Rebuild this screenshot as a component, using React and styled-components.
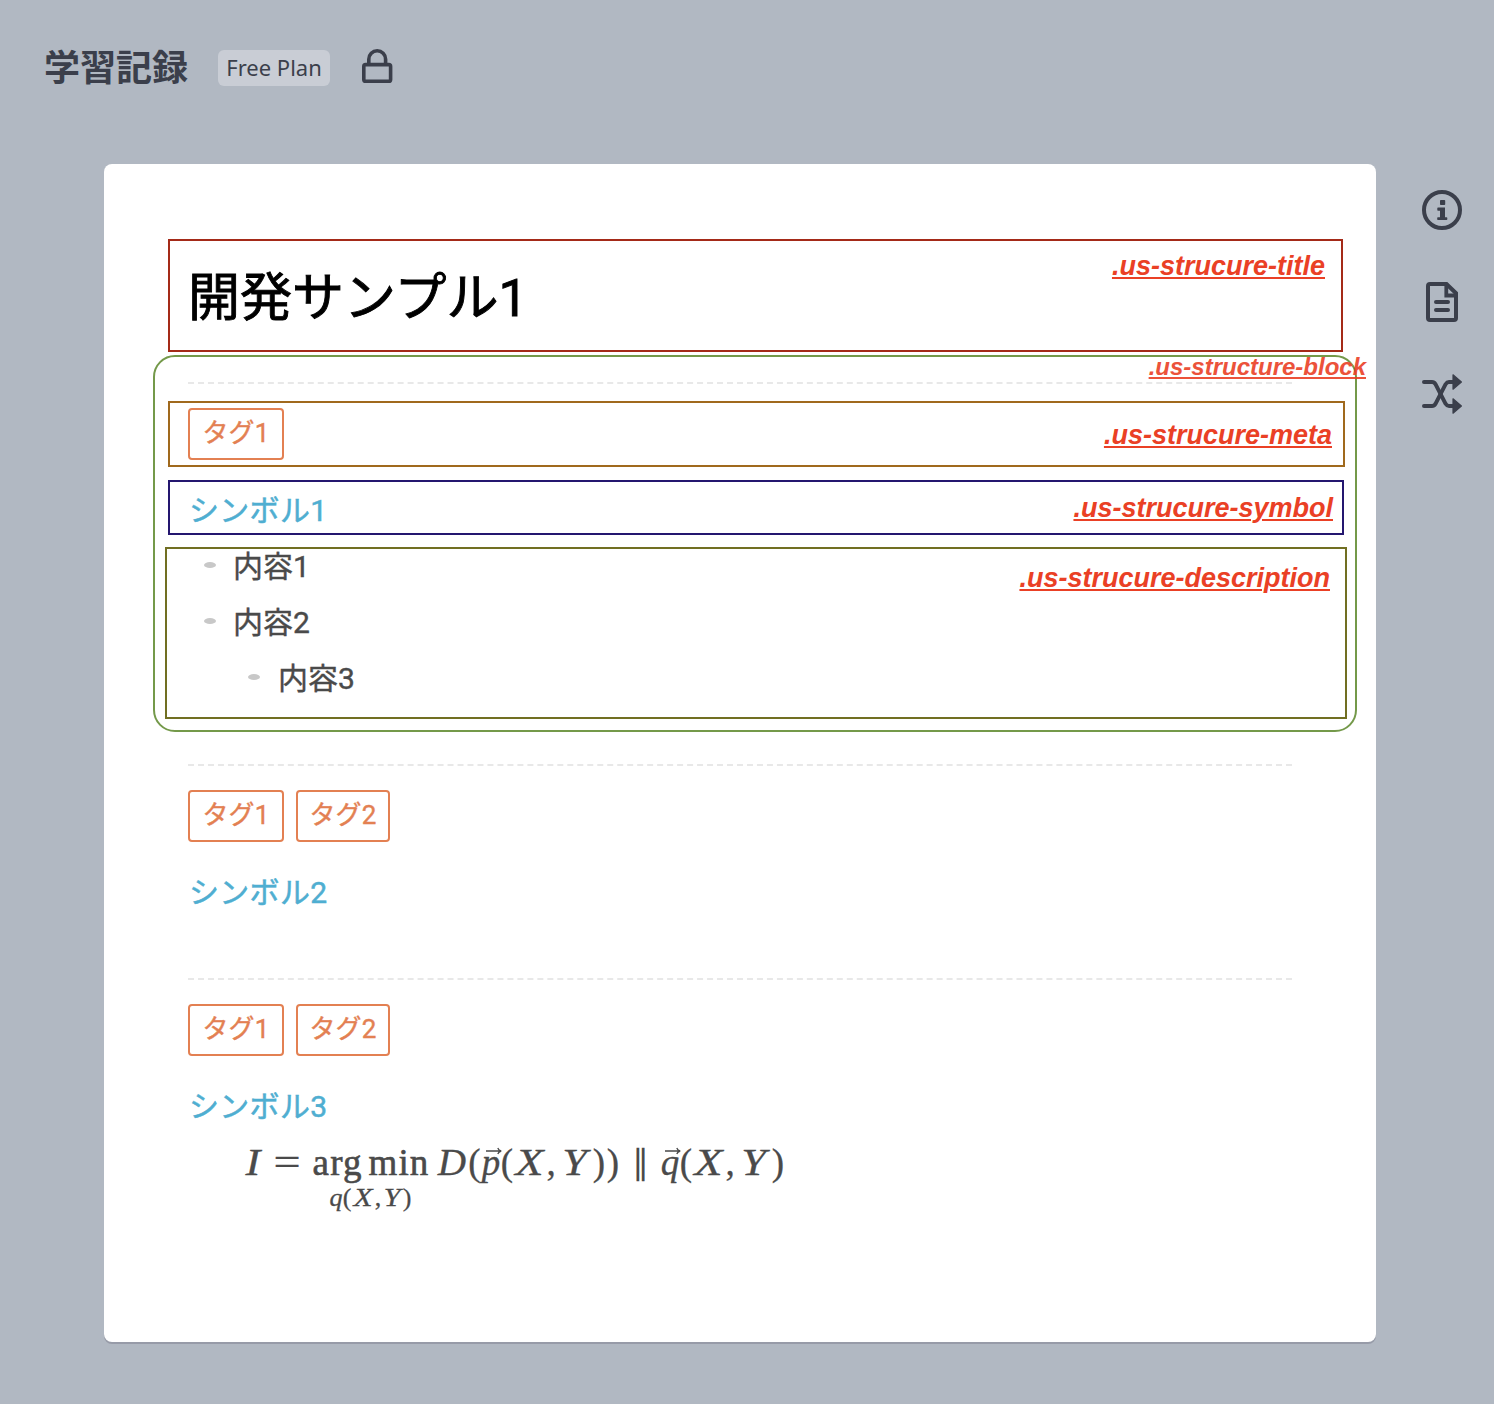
import React from 'react';
import styled, { createGlobalStyle } from 'styled-components';

const GlobalStyle = createGlobalStyle`
  *, *::before, *::after { box-sizing: border-box; }
  body { margin: 0; background: #b1b8c2; }
`;

const ink = '#3b3f4b';
const bodyFont = 'Roboto, "Noto Sans CJK JP", sans-serif';

const Page = styled.div`
  width: 1494px;
  height: 1404px;
  background: #b1b8c2;
  overflow: hidden;
  font-family: ${bodyFont};
`;

const Header = styled.header`
  display: flex;
  align-items: flex-start;
  height: 164px;
  padding: 48px 0 0 44px;
  color: ${ink};
`;

const NotebookTitle = styled.h1`
  margin: -2px 0 0;
  width: 174px;
  font: 700 36px/38px "Noto Sans CJK JP", sans-serif;
`;

const PlanBadge = styled.span`
  width: 112px;
  height: 36px;
  margin: 2px 30px 0 0;
  border-radius: 6px;
  background: #c9cdd5;
  text-align: center;
  font: 400 22px/34px "Noto Sans", sans-serif;
`;

const Main = styled.main`
  display: flex;
  align-items: flex-start;
  padding-left: 104px;
`;

const Sheet = styled.article`
  width: 1272px;
  height: 1178px;
  padding-top: 75px;
  border-radius: 8px;
  background: #fff;
  box-shadow: 0 2px 0 #979ba8;
`;

const Rail = styled.nav`
  display: flex;
  flex-direction: column;
  align-items: center;
  gap: 52px;
  padding: 26px 0 0 46px;
  svg { display: block; }
`;

const Frame = styled.div`
  display: flex;
  align-items: flex-start;
  justify-content: space-between;
  width: ${p => p.$w}px;
  height: ${p => p.$h}px;
  margin: ${p => p.$m};
  padding: 0 ${p => p.$right || 0}px 0 ${p => p.$left || 0}px;
  border: 2px solid ${p => p.$color};
`;

const Label = styled.span`
  margin-top: ${p => p.$top}px;
  color: #ea4025;
  font: italic 700 27px/30px "Liberation Sans", sans-serif;
  text-decoration: underline;
  text-decoration-thickness: 2px;
  text-underline-offset: 2px;
  white-space: nowrap;
`;

const BlockLabel = styled(Label)`
  position: absolute;
  top: -4px;
  right: -11px;
  margin: 0;
  font-size: 24px;
  line-height: 28px;
  opacity: 0.9;
`;

const DocTitle = styled.h2`
  margin: 19px 0 0;
  color: #000;
  font: 400 52px/78px ${bodyFont};
  -webkit-text-stroke: 0.9px #000;
`;

const OutlinedBlock = styled.section`
  position: relative;
  width: 1204px;
  height: 377px;
  margin: 3px 0 0 49px;
  border: 2px solid #74994a;
  border-radius: 22px;
`;

const Divider = styled.hr`
  width: 1104px;
  height: 0;
  margin: ${p => p.$m};
  border: 0;
  border-top: 2px dashed #e8e8e8;
`;

const Block = styled.section`
  height: 214px;
  padding-left: 84px;
`;

const Tags = styled.div`
  display: flex;
  gap: 12px;
  padding-top: ${p => p.$top}px;
`;

const Tag = styled.span`
  width: ${p => p.$w}px;
  height: 52px;
  border: 2px solid #e38052;
  border-radius: 4px;
  color: #e38052;
  font: 400 26px/46px ${bodyFont};
  letter-spacing: 0.2px;
  text-align: center;
  white-space: nowrap;
  -webkit-text-stroke: 0.4px #e38052;
`;

const SymbolName = styled.h3`
  margin: ${p => p.$top}px 0 0 ${p => p.$left || 0}px;
  color: #4faed1;
  font: 400 30px/40px ${bodyFont};
  letter-spacing: 0.3px;
  -webkit-text-stroke: 0.5px #4faed1;
`;

const List = styled.ul`
  display: flex;
  flex-direction: column;
  gap: 18px;
  margin: -1px 0 0;
  padding: 0;
  list-style: none;
`;

const Item = styled.li`
  display: flex;
  align-items: center;
  height: 38px;
  padding-left: ${p => 37 + p.$depth * 44}px;
  color: #4a4a4a;
  font: 400 30px/38px ${bodyFont};
  -webkit-text-stroke: 0.4px #4a4a4a;
  &::before {
    content: '';
    width: 12px;
    height: 6px;
    margin: 0 ${p => 17 + p.$depth}px 4px 0;
    border-radius: 50%;
    background: #c8c8c8;
  }
`;

const Formula = styled.div`
  display: flex;
  align-items: flex-start;
  padding: 14px 0 0 55px;
  color: #4a4a4a;
  font: 400 37px/44px "Liberation Serif", serif;
  -webkit-text-stroke: 0.3px #4a4a4a;
`;

const Glyph = styled.span`
  display: flex;
  flex: none;
  justify-content: center;
  width: ${p => p.$w}px;
  font-style: ${p => (p.$it ? 'italic' : 'normal')};
  white-space: nowrap;
  transform: scaleX(${p => p.$sx || 1});
`;

const Operator = styled.span`
  display: flex;
  flex-direction: column;
  align-items: center;
  width: 120px;
  margin-right: 6px;
`;

const OperatorName = styled.span`
  display: flex;
  gap: 6px;
  letter-spacing: 1.1px;
  -webkit-text-stroke: 0.6px #4a4a4a;
`;

const Under = styled.span`
  display: flex;
  margin-top: -2px;
  font-size: 26px;
  line-height: 30px;
`;

const Vector = styled(Glyph)`
  position: relative;
  svg { position: absolute; left: 3px; top: 6px; }
`;

const Norm = styled(Glyph)`
  font-size: 34px;
  -webkit-text-stroke: 0;
`;

const LockIcon = () => (
  <svg width="34" height="36" viewBox="0 0 34 36" fill="none" stroke={ink} strokeWidth="3.6">
    <rect x="3.8" y="16.6" width="26.8" height="16.6" rx="1.8" />
    <path d="M8.8 16.6V11.2a8.4 8.4 0 0 1 16.8 0v5.4" />
  </svg>
);

const InfoIcon = () => (
  <svg width="40" height="40" viewBox="0 0 40 40" fill={ink}>
    <circle cx="20" cy="20" r="18" fill="none" stroke={ink} strokeWidth="4" />
    <rect x="18" y="10" width="5.2" height="5" rx="0.8" />
    <path d="M16 17.6h7v9.6h1.6q.7 0 .7.7v1.4q0 .7-.7.7h-8.7q-.7 0-.7-.7v-1.4q0-.7.7-.7H18v-6.5h-2q-.7 0-.7-.7v-1.7q0-.7.7-.7z" />
  </svg>
);

const FileIcon = () => (
  <svg width="40" height="40" viewBox="0 0 40 40" fill="none" stroke={ink} strokeWidth="4">
    <path d="M8 2h16.5L34 11.2V36a2 2 0 0 1-2 2H8a2 2 0 0 1-2-2V4a2 2 0 0 1 2-2z" />
    <path d="M24.3 2v11.5H35" strokeWidth="3.8" />
    <path d="M14 20h12M14 28h12" strokeLinecap="round" />
  </svg>
);

const ShuffleIcon = () => (
  <svg width="40" height="40" viewBox="0 0 40 40" fill="none" stroke={ink} strokeWidth="4" strokeLinecap="round">
    <path d="M2 8h8q2.2 0 3.5 2.2L23.6 29.8Q25 32 27 32h5" />
    <path d="M2 32h8q2.2 0 3.5-2.2L23.6 10.2Q25 8 27 8h5" />
    <path d="M31 .8L39.4 8 31 15.2zM31 24.8l8.4 7.2-8.4 7.2z" fill={ink} strokeWidth="1.2" strokeLinejoin="round" />
  </svg>
);

const Arrow = () => (
  <svg width="18" height="8" viewBox="0 0 18 8" fill="none" stroke="#4a4a4a" strokeWidth="1.3">
    <path d="M1 4h15M12.8 1q.8 2.4 3.4 3-2.6.6-3.4 3" />
  </svg>
);

const Arguments = () => (
  <>
    <Glyph $w={14}>(</Glyph>
    <Glyph $w={31} $sx={1.25} $it>X</Glyph>
    <Glyph $w={12}>,</Glyph>
    <Glyph $w={35} $sx={1.2} $it>Y</Glyph>
    <Glyph $w={14}>)</Glyph>
  </>
);

export default function App() {
  return (
    <Page>
      <GlobalStyle />
      <Header>
        <NotebookTitle>学習記録</NotebookTitle>
        <PlanBadge>Free Plan</PlanBadge>
        <LockIcon />
      </Header>
      <Main>
        <Sheet>
          <Frame $w={1175} $h={113} $m="0 0 0 64px" $left={18} $right={16} $color="#a42a18">
            <DocTitle>開発サンプル1</DocTitle>
            <Label $top={10}>.us-strucure-title</Label>
          </Frame>
          <OutlinedBlock>
            <Divider $m="25px 0 17px 33px" />
            <Frame $w={1177} $h={66} $m="0 0 13px 13px" $left={18} $right={11} $color="#a0691d">
              <Tags $top={5}><Tag $w={96}>タグ1</Tag></Tags>
              <Label $top={17}>.us-strucure-meta</Label>
            </Frame>
            <Frame $w={1176} $h={55} $m="0 0 12px 13px" $left={19} $right={9} $color="#24166f">
              <SymbolName $top={9}>シンボル1</SymbolName>
              <Label $top={11}>.us-strucure-symbol</Label>
            </Frame>
            <Frame $w={1182} $h={172} $m="0 0 0 10px" $right={15} $color="#716f22">
              <List>
                <Item $depth={0}>内容1</Item>
                <Item $depth={0}>内容2</Item>
                <Item $depth={1}>内容3</Item>
              </List>
              <Label $top={14}>.us-strucure-description</Label>
            </Frame>
            <BlockLabel>.us-structure-block</BlockLabel>
          </OutlinedBlock>
          <Divider $m="32px 0 0 84px" />
          <Block>
            <Tags $top={24}><Tag $w={96}>タグ1</Tag><Tag $w={94}>タグ2</Tag></Tags>
            <SymbolName $top={31} $left={1}>シンボル2</SymbolName>
          </Block>
          <Divider $m="-2px 0 0 84px" />
          <Block>
            <Tags $top={24}><Tag $w={96}>タグ1</Tag><Tag $w={94}>タグ2</Tag></Tags>
            <SymbolName $top={31} $left={1}>シンボル3</SymbolName>
            <Formula>
              <Glyph $w={20} $sx={1.2} $it>I</Glyph>
              <Glyph $w={48} $sx={1.3}>=</Glyph>
              <Operator>
                <OperatorName><span>arg</span><span>min</span></OperatorName>
                <Under>
                  <Glyph $w={12} $it>q</Glyph>
                  <Glyph $w={10}>(</Glyph>
                  <Glyph $w={22} $sx={1.2} $it>X</Glyph>
                  <Glyph $w={8}>,</Glyph>
                  <Glyph $w={20} $sx={1.15} $it>Y</Glyph>
                  <Glyph $w={10}>)</Glyph>
                </Under>
              </Operator>
              <Glyph $w={30} $sx={1.06} $it>D</Glyph>
              <Glyph $w={15}>(</Glyph>
              <Vector $w={18} $it>p<Arrow /></Vector>
              <Arguments />
              <Glyph $w={14}>)</Glyph>
              <Norm $w={41}>∥</Norm>
              <Vector $w={18} $it>q<Arrow /></Vector>
              <Arguments />
            </Formula>
          </Block>
        </Sheet>
        <Rail>
          <InfoIcon />
          <FileIcon />
          <ShuffleIcon />
        </Rail>
      </Main>
    </Page>
  );
}
